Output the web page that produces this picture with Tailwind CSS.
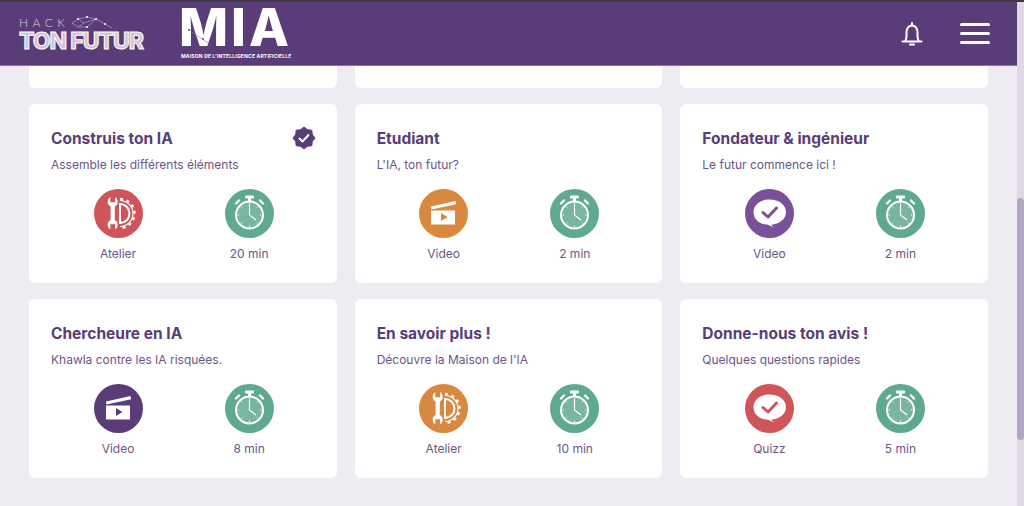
<!DOCTYPE html>
<html lang="fr">
<head>
    <meta charset="UTF-8">
    <meta name="viewport" content="width=device-width, initial-scale=1.0">
    <title>Hack ton futur</title>
    <script src="https://cdn.jsdelivr.net/npm/@tailwindcss/browser@4"></script>
</head>
<body class="h-[506px] overflow-hidden flex flex-col bg-[#eeebf2] font-['Inter','Noto_Sans',sans-serif] text-[#6c5587]">
    <!-- shared icons -->
    <svg class="hidden">
        <symbol id="timer" viewBox="0 0 49 49">
            <rect x="20" y="6.500" width="9" height="3" rx="1" fill="#fff"/>
            <rect x="23" y="9" width="3" height="4" fill="#fff"/>
            <path d="M35 11.500l3 3M14 11.500l-3 3" stroke="#fff" stroke-width="2.400" stroke-linecap="round"/>
            <circle cx="24.500" cy="26" r="13.500" fill="#fff" fill-opacity=".16" stroke="#fff" stroke-width="2"/>
            <path d="M24.500 15.500v10.500l6.500 5" fill="none" stroke="#fff" stroke-width="1.200"/>
            <path d="M24.500 14v1.500M24.500 36.500v1.500M12.500 26h1.500M35 26h1.500M16 17.500l1 1M33 17.500l-1 1M16 34.500l1-1M33 34.500l-1-1" stroke="#fff" stroke-width="1"/>
        </symbol>
        <symbol id="clap" viewBox="0 0 49 49">
            <path d="M12 17.500l24.500-5.500.7 3.200-24.700 5.300z" fill="#fff"/>
            <path d="M12 21.500h24v14H12z" fill="#fff"/>
            <path d="M22 24l6.500 4-6.500 4z" fill="currentColor"/>
        </symbol>
        <symbol id="chat" viewBox="0 0 49 49">
            <path d="M24.500 10.500c9.500 0 16.500 5.300 16.500 12.700 0 6.800-6.500 12-15 12.500l3 2.800-6-2.700C14.500 35.500 8.500 30 8.500 23.200c0-7.400 6.500-12.700 16-12.700z" fill="#fff"/>
            <path d="M18 23.500l5 4.500 8.500-9" fill="none" stroke="currentColor" stroke-width="3" stroke-linecap="round" stroke-linejoin="round"/>
        </symbol>
        <symbol id="tool" viewBox="0 0 49 49">
            <path d="M16.300 8.300v5h4.800v-5c1.600.9 2.600 2.500 2.600 4.500 0 2.300-1.100 3.900-2.900 4.800v13.300c1.800.9 2.900 2.500 2.900 4.800 0 2-1 3.600-2.600 4.500v-5h-4.800v5c-1.600-.9-2.600-2.500-2.600-4.500 0-2.300 1.100-3.900 2.900-4.800V17.600c-1.800-.9-2.900-2.500-2.900-4.800 0-2 1-3.600 2.600-4.500z" fill="#fff"/>
            <path d="M26 15a9.500 9.500 0 0 1 0 19z" fill="none" stroke="#fff" stroke-width="2"/>
            <path d="M26 11.500a13 13 0 0 1 0 26" fill="none" stroke="#fff" stroke-width="1.100"/>
            <path d="M26 10a14.500 14.500 0 0 1 0 29" fill="none" stroke="#fff" stroke-width="2.400" stroke-dasharray="3 3.600"/>
        </symbol>
    </svg>

    <div class="h-[2px] shrink-0 bg-[#3f3a44]"></div>

    <div class="flex-1 flex min-h-0">
        <div class="flex-1 flex flex-col min-w-0">
            <header class="h-[64px] shrink-0 bg-[#5a3d78] border-b border-[#8a72a3] flex items-center pl-[19px] pr-[27px] text-white">
                <div class="w-[160px] shrink-0 flex flex-col">
                    <div class="flex items-center h-[14px]">
                        <span class="text-[12px] leading-none font-light tracking-[4.500px] font-['Lato',sans-serif] text-[#d9d0e2]">HACK</span>
                        <svg class="w-[44px] h-[14px] ml-[2px]" viewBox="0 0 44 14" fill="none" stroke="#cfc5da" stroke-width=".5">
                            <path d="M1 7l6-4 6 4-6 4zM7 3l9-2 9 2 16 9M13 7l12-4M7 11l9 0 9-8"/>
                            <g fill="#fff" stroke="none"><circle cx="7" cy="3" r="1"/><circle cx="16" cy="1" r="1"/><circle cx="25" cy="3" r="1"/><circle cx="34" cy="8" r="1"/><circle cx="16" cy="11" r="1"/></g>
                        </svg>
                    </div>
                    <span class="text-[23px] leading-[20px] mt-[1px] font-extrabold tracking-[-1px] whitespace-nowrap text-[#cfc5da] [-webkit-text-stroke:1px_white]">TON FUTUR</span>
                </div>
                <div class="relative w-[112px] h-[52px] shrink-0 mt-[-4px]">
                    <div class="text-[52px] leading-[44px] font-extrabold tracking-[3px] whitespace-nowrap">MIA</div>
                    <svg class="absolute left-0 top-0 w-[60px] h-[46px]" viewBox="0 0 60 46" fill="none">
                        <path d="M10 24l22 15" stroke="#8a72a3" stroke-width=".6"/>
                        <circle cx="10" cy="24" r=".9" fill="#5a3d78"/>
                        <circle cx="24" cy="33" r=".9" fill="#5a3d78"/>
                    </svg>
                    <div class="text-[5px] leading-none font-bold tracking-[.18px] mt-[4px] ml-[2px] whitespace-nowrap">MAISON DE L'INTELLIGENCE ARTIFICIELLE</div>
                </div>
                <div class="ml-auto flex items-center gap-[37px]">
                    <svg class="w-[22px] h-[24px]" viewBox="0 0 22 24" fill="none" stroke="#fff" stroke-width="2" stroke-linecap="round" stroke-linejoin="round">
                        <path d="M1.500 19.500h19M4 19.500c1-1.500 1.500-3 1.500-5.500V10a5.500 6.500 0 0 1 11 0v4c0 2.500.5 4 1.500 5.500"/>
                        <path d="M11 1v2M9 22.500h4"/>
                    </svg>
                    <div class="w-[30px] flex flex-col gap-[6px]">
                        <div class="h-[3px] rounded-full bg-white"></div>
                        <div class="h-[3px] rounded-full bg-white"></div>
                        <div class="h-[3px] rounded-full bg-white"></div>
                    </div>
                </div>
            </header>

            <main class="px-[29px] grid grid-cols-3 gap-x-[18px] gap-y-[16px] grid-rows-[22px_179px_179px]">
                <div class="bg-white rounded-b-md"></div>
                <div class="bg-white rounded-b-md"></div>
                <div class="bg-white rounded-b-md"></div>

                <article class="relative bg-white rounded-md px-[22px] pt-[25px]">
                    <h2 class="text-[15.500px] leading-[20px] font-bold text-[#5a3d78]">Construis ton IA</h2>
                    <svg class="absolute right-[21px] top-[22px] w-[24px] h-[24px]" viewBox="0 0 24 24">
                        <polygon points="12,1 15.440,3.680 19.780,4.220 20.310,8.560 23,12 20.310,15.440 19.780,19.780 15.440,20.310 12,23 8.560,20.310 4.220,19.780 3.680,15.440 1,12 3.680,8.560 4.220,4.220 8.560,3.680" fill="#5a3d78" stroke="#5a3d78" stroke-width="1" stroke-linejoin="round"/>
                        <path d="M7.500 12.500l3 3 6-6.500" fill="none" stroke="#fff" stroke-width="2" stroke-linecap="round" stroke-linejoin="round"/>
                    </svg>
                    <p class="text-[12px] leading-[16px] mt-[8px]">Assemble les différents éléments</p>
                    <div class="grid grid-cols-2 pl-[1.500px] mt-[16px] text-[12px] text-center">
                        <div class="flex flex-col items-center gap-[8px]">
                            <svg class="w-[49px] h-[49px] rounded-full bg-[#d0555a] text-[#d0555a]"><use href="#tool"/></svg>
                            <span class="leading-[16px]">Atelier</span>
                        </div>
                        <div class="flex flex-col items-center gap-[8px]">
                            <svg class="w-[49px] h-[49px] rounded-full bg-[#5fa992]"><use href="#timer"/></svg>
                            <span class="leading-[16px]">20 min</span>
                        </div>
                    </div>
                </article>

                <article class="bg-white rounded-md px-[22px] pt-[25px]">
                    <h2 class="text-[15.500px] leading-[20px] font-bold text-[#5a3d78]">Etudiant</h2>
                    <p class="text-[12px] leading-[16px] mt-[8px]">L'IA, ton futur?</p>
                    <div class="grid grid-cols-2 pl-[1.500px] mt-[16px] text-[12px] text-center">
                        <div class="flex flex-col items-center gap-[8px]">
                            <svg class="w-[49px] h-[49px] rounded-full bg-[#d9883f] text-[#d9883f]"><use href="#clap"/></svg>
                            <span class="leading-[16px]">Video</span>
                        </div>
                        <div class="flex flex-col items-center gap-[8px]">
                            <svg class="w-[49px] h-[49px] rounded-full bg-[#5fa992]"><use href="#timer"/></svg>
                            <span class="leading-[16px]">2 min</span>
                        </div>
                    </div>
                </article>

                <article class="bg-white rounded-md px-[22px] pt-[25px]">
                    <h2 class="text-[15.500px] leading-[20px] font-bold text-[#5a3d78]">Fondateur &amp; ingénieur</h2>
                    <p class="text-[12px] leading-[16px] mt-[8px]">Le futur commence ici !</p>
                    <div class="grid grid-cols-2 pl-[1.500px] mt-[16px] text-[12px] text-center">
                        <div class="flex flex-col items-center gap-[8px]">
                            <svg class="w-[49px] h-[49px] rounded-full bg-[#7a5098] text-[#7a5098]"><use href="#chat"/></svg>
                            <span class="leading-[16px]">Video</span>
                        </div>
                        <div class="flex flex-col items-center gap-[8px]">
                            <svg class="w-[49px] h-[49px] rounded-full bg-[#5fa992]"><use href="#timer"/></svg>
                            <span class="leading-[16px]">2 min</span>
                        </div>
                    </div>
                </article>

                <article class="bg-white rounded-md px-[22px] pt-[25px]">
                    <h2 class="text-[15.500px] leading-[20px] font-bold text-[#5a3d78]">Chercheure en IA</h2>
                    <p class="text-[12px] leading-[16px] mt-[8px]">Khawla contre les IA risquées.</p>
                    <div class="grid grid-cols-2 pl-[1.500px] mt-[16px] text-[12px] text-center">
                        <div class="flex flex-col items-center gap-[8px]">
                            <svg class="w-[49px] h-[49px] rounded-full bg-[#5a3d78] text-[#5a3d78]"><use href="#clap"/></svg>
                            <span class="leading-[16px]">Video</span>
                        </div>
                        <div class="flex flex-col items-center gap-[8px]">
                            <svg class="w-[49px] h-[49px] rounded-full bg-[#5fa992]"><use href="#timer"/></svg>
                            <span class="leading-[16px]">8 min</span>
                        </div>
                    </div>
                </article>

                <article class="bg-white rounded-md px-[22px] pt-[25px]">
                    <h2 class="text-[15.500px] leading-[20px] font-bold text-[#5a3d78]">En savoir plus !</h2>
                    <p class="text-[12px] leading-[16px] mt-[8px]">Découvre la Maison de l'IA</p>
                    <div class="grid grid-cols-2 pl-[1.500px] mt-[16px] text-[12px] text-center">
                        <div class="flex flex-col items-center gap-[8px]">
                            <svg class="w-[49px] h-[49px] rounded-full bg-[#d9883f] text-[#d9883f]"><use href="#tool"/></svg>
                            <span class="leading-[16px]">Atelier</span>
                        </div>
                        <div class="flex flex-col items-center gap-[8px]">
                            <svg class="w-[49px] h-[49px] rounded-full bg-[#5fa992]"><use href="#timer"/></svg>
                            <span class="leading-[16px]">10 min</span>
                        </div>
                    </div>
                </article>

                <article class="bg-white rounded-md px-[22px] pt-[25px]">
                    <h2 class="text-[15.500px] leading-[20px] font-bold text-[#5a3d78]">Donne-nous ton avis !</h2>
                    <p class="text-[12px] leading-[16px] mt-[8px]">Quelques questions rapides</p>
                    <div class="grid grid-cols-2 pl-[1.500px] mt-[16px] text-[12px] text-center">
                        <div class="flex flex-col items-center gap-[8px]">
                            <svg class="w-[49px] h-[49px] rounded-full bg-[#d0555a] text-[#d0555a]"><use href="#chat"/></svg>
                            <span class="leading-[16px]">Quizz</span>
                        </div>
                        <div class="flex flex-col items-center gap-[8px]">
                            <svg class="w-[49px] h-[49px] rounded-full bg-[#5fa992]"><use href="#timer"/></svg>
                            <span class="leading-[16px]">5 min</span>
                        </div>
                    </div>
                </article>
            </main>
        </div>

        <!-- scrollbar -->
        <div class="w-[7px] shrink-0 bg-[#ddd8e4] pt-[196px]">
            <div class="h-[242px] rounded-full bg-[#b3a6c2]"></div>
        </div>
    </div>
</body>
</html>
